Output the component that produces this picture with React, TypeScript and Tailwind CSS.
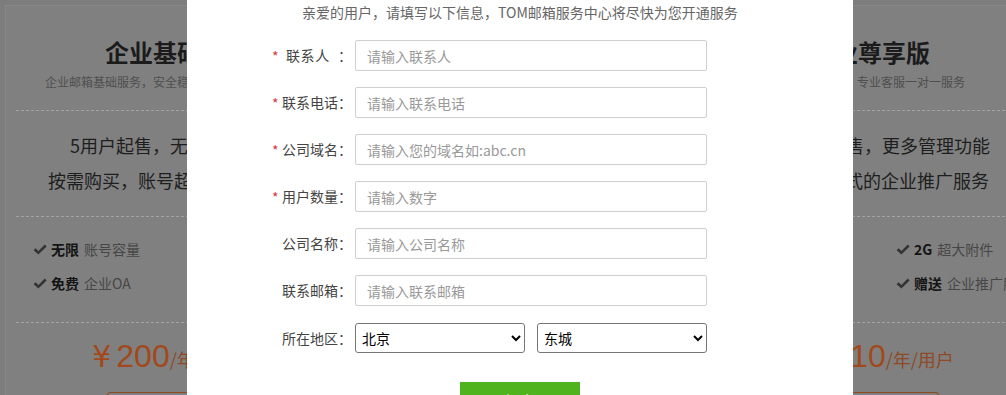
import React from "react";

type Feature = { b: string; t: string };
type CardData = {
  title: string;
  titleShift?: boolean;
  sub: string;
  l1: string;
  l2: string;
  col1: Feature[];
  col2: Feature[];
  price: string;
};

const cards: CardData[] = [
  {
    title: "企业基础版",
    sub: "企业邮箱基础服务，安全稳定的高效办公平台",
    l1: "5用户起售，无上限扩容",
    l2: "按需购买，账号超出随时增购",
    col1: [
      { b: "无限", t: "账号容量" },
      { b: "免费", t: "企业OA" },
    ],
    col2: [],
    price: "200",
  },
  {
    title: "企业标准版",
    sub: "企业邮箱标准服务，满足中小企业办公需求",
    l1: "10用户起售，功能更丰富",
    l2: "支持自定义域名，海外畅通收发",
    col1: [
      { b: "无限", t: "容量" },
      { b: "免费", t: "OA" },
    ],
    col2: [
      { b: "1G", t: "超大附件" },
      { b: "免费", t: "邮件归档" },
    ],
    price: "300",
  },
  {
    title: "企业尊享版",
    titleShift: true,
    sub: "更多功能，专业客服一对一服务",
    l1: "50用户起售，更多管理功能",
    l2: "享受多形式的企业推广服务",
    col1: [
      { b: "无限", t: "容量" },
      { b: "免费", t: "OA" },
    ],
    col2: [
      { b: "2G", t: "超大附件" },
      { b: "赠送", t: "企业推广服务" },
    ],
    price: "410",
  },
];

function Check() {
  return (
    <svg width="14" height="11" viewBox="0 0 14 11" className="mr-[4px] shrink-0">
      <path d="M0.6 6.2 L2.6 4.2 L5.4 7 L11.8 0.6 L13.6 2.4 L5.4 10.4 Z" fill="#333" />
    </svg>
  );
}

function FeatureItem({ f }: { f: Feature }) {
  return (
    <div className="flex h-[34px] items-center whitespace-nowrap text-[14px]">
      <Check />
      <span className="font-bold text-[#141414]">{f.b}</span>
      <span className="ml-[5px] text-[#474747]">{f.t}</span>
    </div>
  );
}

function PriceCard({ c }: { c: CardData }) {
  return (
    <div className="h-[440px] w-[320px] shrink-0 border border-[#878787] bg-[#808080] px-[10px] pt-[34px]">
      <div
        className={
          c.titleShift
            ? "whitespace-nowrap pr-[22px] text-center text-[24px] font-bold leading-[24px] text-[#1b1b1b]"
            : "whitespace-nowrap text-center text-[24px] font-bold leading-[24px] text-[#1b1b1b]"
        }
      >
        {c.title}
      </div>
      <div className="mt-[10px] whitespace-nowrap text-center text-[12px] leading-[16px] text-[#4f4f4f]">
        {c.sub}
      </div>
      <div className="mt-[20px] border-t border-dashed border-[#a3a3a3]" />
      <div className="pb-[18px] pt-[17px] text-center text-[18px] leading-[35px] text-[#1e1e1e]">
        <div className="whitespace-nowrap">{c.l1}</div>
        <div className="whitespace-nowrap">{c.l2}</div>
      </div>
      <div className="border-t border-dashed border-[#a3a3a3]" />
      <div className="grid grid-cols-[147px_1fr] pb-[22px] pl-[17px] pt-[15px]">
        <div>
          {c.col1.map((f) => (
            <FeatureItem key={f.b + f.t} f={f} />
          ))}
        </div>
        <div>
          {c.col2.map((f) => (
            <FeatureItem key={f.b + f.t} f={f} />
          ))}
        </div>
      </div>
      <div className="border-t border-dashed border-[#a3a3a3]" />
      <div className="mt-[17px] flex h-[32px] items-baseline justify-center whitespace-nowrap text-[#a2491c]">
        <span className="mr-[5px] font-['DejaVu_Sans',sans-serif] text-[30px] leading-none">¥</span>
        <span className="font-['Liberation_Sans',sans-serif] text-[32px] leading-none">{c.price}</span>
        <span className="text-[18px] leading-none text-[#8e4a26]">/年/用户</span>
      </div>
      <div className="mx-auto mt-[20px] h-[36px] w-[116px] rounded-[3px] border border-[#8b4a20]" />
    </div>
  );
}

function Label({ req, children }: { req?: boolean; children: React.ReactNode }) {
  return (
    <>
      <span className="w-[9px] text-[14px] leading-none text-[#d9363e]">{req ? "*" : ""}</span>
      <span className="flex w-[71px] justify-end whitespace-nowrap text-[14px] text-[#444]">{children}</span>
    </>
  );
}

function InputRow({ req, label, ph }: { req?: boolean; label: React.ReactNode; ph: string }) {
  return (
    <div className="flex h-[31px] items-center pl-[85px]">
      <Label req={req}>{label}</Label>
      <input
        className="ml-[3px] h-[31px] w-[352px] rounded-[2px] border border-[#cfcfcf] bg-white pl-[11px] text-[14px] text-[#333] outline-none placeholder:text-[#999]"
        placeholder={ph}
      />
    </div>
  );
}

export default function App() {
  return (
    <div className="relative h-[395px] w-[1006px] overflow-hidden bg-[#7d7d7d] font-['Noto_Sans_CJK_SC','Noto_Sans',sans-serif]">
      <div className="flex gap-[38px] pl-[5px] pt-[5px]">
        {cards.map((c) => (
          <PriceCard key={c.title} c={c} />
        ))}
      </div>

      <div className="absolute left-[187px] top-[-20px] h-[460px] w-[666px] bg-white">
        <div className="whitespace-nowrap pt-[22px] text-center text-[14px] leading-[20px] text-[#666]">
          亲爱的用户，请填写以下信息，TOM邮箱服务中心将尽快为您开通服务
        </div>
        <div className="mt-[18px] flex flex-col gap-[16px]">
          <InputRow
            req
            label={
              <>
                <span className="tracking-[0.7px]">联系人</span>
                <span className="ml-[8px]">：</span>
              </>
            }
            ph="请输入联系人"
          />
          <InputRow req label="联系电话：" ph="请输入联系电话" />
          <InputRow req label="公司域名：" ph="请输入您的域名如:abc.cn" />
          <InputRow req label="用户数量：" ph="请输入数字" />
          <InputRow label="公司名称：" ph="请输入公司名称" />
          <InputRow label="联系邮箱：" ph="请输入联系邮箱" />
          <div className="mt-[1px] flex h-[30px] items-center pl-[85px]">
            <Label>所在地区：</Label>
            <select
              className="ml-[3px] h-[30px] w-[170px] rounded-[3px] border border-[#767676] bg-white pl-[2px] text-[14px] text-black"
              defaultValue="北京"
            >
              <option>北京</option>
              <option>上海</option>
              <option>广东</option>
            </select>
            <select
              className="ml-[12px] h-[30px] w-[170px] rounded-[3px] border border-[#767676] bg-white pl-[2px] text-[14px] text-black"
              defaultValue="东城"
            >
              <option>东城</option>
              <option>西城</option>
              <option>朝阳</option>
            </select>
          </div>
        </div>
        <button className="mx-auto mt-[29px] block h-[38px] w-[120px] bg-[#4fb31d] text-[15px] text-white">
          提交
        </button>
      </div>
    </div>
  );
}
